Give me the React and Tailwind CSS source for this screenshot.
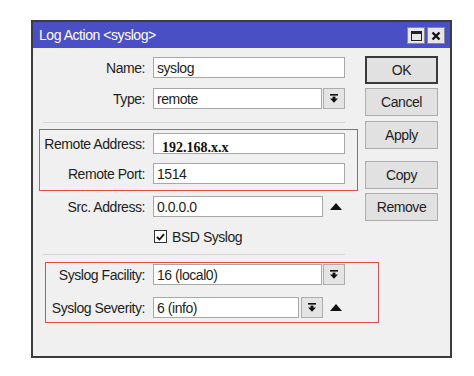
import React from "react";

const font = { fontFamily: '"Liberation Sans", Arial, sans-serif' };

function DropIcon() {
  return (
    <svg width="8" height="9" viewBox="0 0 8 9">
      <rect x="0" y="0" width="8" height="1.6" fill="#111" />
      <rect x="2.6" y="2.6" width="2.8" height="2.4" fill="#111" />
      <polygon points="0,4.6 8,4.6 4,8.8" fill="#111" />
    </svg>
  );
}

function DropBtn({ className = "" }) {
  return (
    <div className={"h-[21px] w-[22px] border border-[#adadad] bg-[#e4e4e4] flex items-center justify-center " + className}>
      <DropIcon />
    </div>
  );
}

function UpTri({ className = "" }) {
  return (
    <svg width="12" height="7" viewBox="0 0 12 7" className={className}>
      <polygon points="0,7 12,7 6,0" fill="#111" />
    </svg>
  );
}

function Input({ w, children }) {
  return (
    <div
      className="h-[21px] border border-[#a8a8a8] bg-white flex items-center pl-[3px] text-[14px] tracking-[-0.45px] text-[#1e1e1e] leading-none"
      style={{ width: w }}
    >
      {children}
    </div>
  );
}

function Label({ w, children }) {
  return (
    <div className="text-right text-[14px] tracking-[-0.45px] text-[#1e1e1e] leading-none pr-[8px]" style={{ width: w }}>
      {children}
    </div>
  );
}

function Btn({ children, def, className = "" }) {
  return (
    <div
      className={
        "w-[73px] h-[28px] bg-[#e1e1e1] flex items-center justify-center text-[14px] tracking-[-0.45px] text-[#1e1e1e] " +
        (def ? "border-2 border-[#3a3a3a] " : "border border-[#adadad] ") +
        className
      }
    >
      {children}
    </div>
  );
}

export default function App() {
  return (
    <div className="w-[474px] h-[376px] bg-white overflow-hidden" style={font}>
      <div className="ml-[31px] mt-[20px] w-[421px] h-[338px] border-2 border-[#3c3c3c] bg-[#f0f0f0] flex flex-col">
        {/* title bar */}
        <div className="h-[26px] bg-[#4a4fc6] flex items-center justify-between pl-[6px] pr-[5px]">
          <span className="text-[14px] tracking-[-0.45px] text-white leading-none">Log Action &lt;syslog&gt;</span>
          <div className="flex gap-[2px] mt-[1px]">
            <div className="w-[18px] h-[17px] bg-[#e6e6e6] border border-[#8a8a8a] flex items-center justify-center">
              <div className="w-[11px] h-[10px] border border-[#222] border-t-[3px]" />
            </div>
            <div className="w-[18px] h-[17px] bg-[#e6e6e6] border border-[#8a8a8a] flex items-center justify-center">
              <svg width="10" height="10" viewBox="0 0 10 10">
                <path d="M1.5 1.5 L8.5 8.5 M8.5 1.5 L1.5 8.5" stroke="#111" strokeWidth="2.4" />
              </svg>
            </div>
          </div>
        </div>

        {/* body */}
        <div className="flex flex-1">
          <div className="w-[332px] flex flex-col">
            <div className="mt-[9px] flex items-center">
              <Label w={120}>Name:</Label>
              <Input w={192}>syslog</Input>
            </div>
            <div className="mt-[10px] flex items-center">
              <Label w={120}>Type:</Label>
              <Input w={169}>remote</Input>
              <DropBtn className="ml-[1px]" />
            </div>
            <div className="mt-[13px] ml-[10px] w-[302px] h-[1px] bg-[#d6d6d6]" />

            <div className="mt-[6px] ml-[6px] w-[319px] border border-[#df4f4f] pt-[3px] pb-[6px] flex flex-col">
              <div className="flex items-center">
                <Label w={113}>Remote Address:</Label>
                <div className="h-[21px] w-[192px] border border-[#a8a8a8] bg-white pl-[8px] pt-[7px]">
                  <span
                    className="block text-[14px] font-bold leading-[14px] text-[#111]"
                    style={{ fontFamily: '"Liberation Serif", "Times New Roman", serif' }}
                  >
                    192.168.x.x
                  </span>
                </div>
              </div>
              <div className="mt-[9px] flex items-center">
                <Label w={113}>Remote Port:</Label>
                <Input w={192}>1514</Input>
              </div>
            </div>

            <div className="mt-[5px] flex items-center">
              <Label w={120}>Src. Address:</Label>
              <Input w={170}>0.0.0.0</Input>
              <UpTri className="ml-[7px]" />
            </div>

            <div className="mt-[13px] ml-[121px] flex items-center h-[13px]">
              <div className="w-[13px] h-[13px] border border-[#333] bg-white flex items-center justify-center">
                <svg width="9" height="8" viewBox="0 0 9 8">
                  <path d="M1 4 L3.5 6.5 L8 1.2" stroke="#111" strokeWidth="1.8" fill="none" />
                </svg>
              </div>
              <span className="ml-[5px] text-[14px] tracking-[-0.45px] text-[#1e1e1e] leading-none">BSD Syslog</span>
            </div>

            <div className="mt-[11px] ml-[10px] w-[302px] h-[1px] bg-[#d6d6d6]" />

            <div className="mt-[7px] ml-[12px] w-[334px] border border-[#df4f4f] pt-[1px] pb-[4px] flex flex-col">
              <div className="flex items-center">
                <Label w={107}>Syslog Facility:</Label>
                <Input w={169}>16 (local0)</Input>
                <DropBtn className="ml-[1px]" />
              </div>
              <div className="mt-[12px] flex items-center">
                <Label w={107}>Syslog Severity:</Label>
                <Input w={146}>6 (info)</Input>
                <DropBtn className="ml-[2px]" />
                <UpTri className="ml-[7px]" />
              </div>
            </div>
          </div>

          <div className="ml-auto mr-[12px] flex flex-col">
            <Btn def className="mt-[8px]">OK</Btn>
            <Btn className="mt-[4px]">Cancel</Btn>
            <Btn className="mt-[5px]">Apply</Btn>
            <Btn className="mt-[12px]">Copy</Btn>
            <Btn className="mt-[4px]">Remove</Btn>
          </div>
        </div>
      </div>
    </div>
  );
}
